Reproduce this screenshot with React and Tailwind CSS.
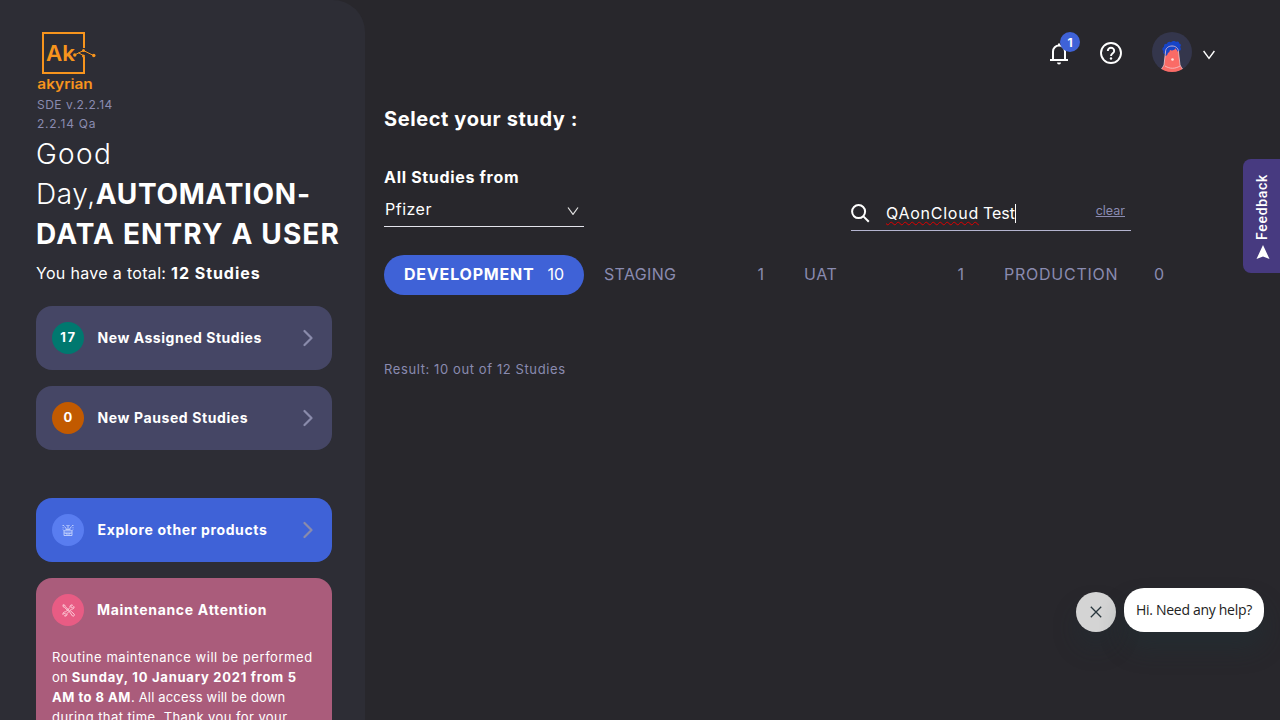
import React from "react";

function Chevron({ className }) {
  return (
    <svg className={className} viewBox="0 0 10 18" fill="none" stroke="currentColor" strokeWidth="2.2" strokeLinecap="round" strokeLinejoin="round">
      <path d="M1.500 2 8.500 9l-7 7" />
    </svg>
  );
}

function Logo() {
  return (
    <svg className="block h-[64px] w-[64px] shrink-0" viewBox="0 0 64 64" fill="none" stroke="#f7941d">
      <path d="M48 18V3H7v40h41V27" strokeWidth="2" />
      <text x="10" y="31" fill="#f7941d" stroke="none" fontSize="22" fontWeight="600" textLength="29" lengthAdjust="spacingAndGlyphs" fontFamily="Inter, sans-serif">Ak</text>
      <path d="M38.500 25 47.500 20.500 57.500 25.500M42.500 22.800l5 2.800" strokeWidth="1" />
      <g fill="#f7941d" stroke="none">
        <circle cx="38.800" cy="25" r="1.700" />
        <circle cx="47.500" cy="20.500" r="1.500" />
        <circle cx="47.500" cy="26" r="1.500" />
        <circle cx="57.800" cy="25.500" r="1.700" />
      </g>
      <text x="1.300" y="59" fill="#f7941d" stroke="none" fontSize="13.500" fontWeight="600" textLength="55.500" lengthAdjust="spacingAndGlyphs" fontFamily="Inter, sans-serif">akyrian</text>
    </svg>
  );
}

function Avatar() {
  return (
    <svg className="block size-10" viewBox="0 0 40 40">
      <defs><clipPath id="round"><circle cx="20" cy="20" r="20" /></clipPath></defs>
      <circle cx="20" cy="20" r="20" fill="#34364c" />
      <g clipPath="url(#round)">
        <path d="M13.500 20C14 16 16 14 20 14s6 2 6.500 6l1.500 13 2.500 4v4h-21v-4l2.500-4z" fill="#fa6b66" />
        <path d="M13 22c-2 0-2-2-1.500-3-2-1-1-4 .5-4-.5-2 1-4 3-3 0-2 3-3 4-1.500C20 8.500 23 8.500 24 10c2-1 3.500 0 3 1.500 2 0 2.500 2.500 1 3.500 1.500 1 1 4-1 4-1 1-2 .5-2-1-1 0-1-1-1-2-1 2-4 3-6 2-.5 2-1 3-2 2.500-.5 2-1 3.500-3 3.500z" fill="#1644c7" />
        <path d="M13.500 20c0-4 3-6 6.500-6s6.500 2 6.500 6l1.500 13c1 2 2 3 2.500 4M13.500 20 12 33c-1 2-2 3-2.500 4M13 34c5 3 10 3 15 0" fill="none" stroke="#f2c9cf" strokeWidth=".8" />
        <circle cx="20.500" cy="27.500" r="1.300" fill="#ffe2df" />
      </g>
    </svg>
  );
}

function BoxIcon() {
  return (
    <svg className="size-3" viewBox="0 0 12 12" fill="none" stroke="#dbe4ff" strokeWidth=".75">
      <path d="M2 6.800h8v4.700H2zM2 9h8M1 5.500l1 1.300M11 5.500l-1 1.300M4 9v1h4V9M6 1v4M2.500 2.500l2 2.500M9.500 2.500l-2 2.500M3.500 5.500h5M.5 1.500h1.600M10 1.500h1.500M4.500 1l.8 1M7.500 1l-.8 1M.6 3.800h1M10.500 3.800h1" />
    </svg>
  );
}

function ToolsIcon() {
  return (
    <svg className="size-[13px]" viewBox="0 0 13 13" fill="none" stroke="#ffdbe4" strokeWidth=".85">
      <path d="M1 .8 2.800 1.200 3.300 2.600 7 6.300 6.200 7 2.500 3.300 1.200 2.800zM7.500 7.800l1-1 3.700 3.400c.8 1-.6 2.600-1.700 1.800zM12 2.500 10.300 4 9 2.700 10.500 1C9 .5 7.500 1.600 8 3.500L3.500 8C1.800 7.600.6 9 1 10.500L2.500 9 4 10.500 2.500 12C4 12.500 5.500 11.400 5 9.500L9.500 5C11.200 5.500 12.500 4 12 2.500z" />
    </svg>
  );
}

function SideCard({ className, badge, badgeClass, label, labelClass }) {
  return (
    <div className={"flex h-16 shrink-0 items-center rounded-2xl pl-4 pr-[19px] " + className}>
      <div className={"flex size-8 shrink-0 items-center justify-center rounded-full text-[13px] font-bold " + badgeClass}>{badge}</div>
      <span className={"ml-[13.5px] flex-1 whitespace-nowrap text-sm font-bold " + labelClass}>{label}</span>
      <Chevron className="h-[18px] w-[10px] text-[#8a8bab]" />
    </div>
  );
}

function Tab({ label, count, tracking }) {
  return (
    <div className="flex h-[38px] w-[200px] items-center justify-between px-5">
      <span className={tracking}>{label}</span>
      <span>{count}</span>
    </div>
  );
}

export default function App() {
  return (
    <div className="relative flex h-[720px] w-[1280px] overflow-hidden bg-[#28272c] font-['Inter',sans-serif] text-white">
      <aside className="flex w-[365px] shrink-0 flex-col overflow-hidden rounded-tr-[32px] bg-[#2d2d35] pl-9 pt-[30px]">
        <Logo />
        <div className="mt-px pl-px text-xs leading-[19px] text-[#8a8bb0]">
          <div className="tracking-[0.5px]">SDE v.2.2.14</div>
          <div className="tracking-[0.75px]">2.2.14 Qa</div>
        </div>
        <h1 className="mt-px whitespace-nowrap text-[28px] font-light leading-10">
          <span className="block tracking-[1.3px]">Good</span>
          <span className="block"><span className="tracking-[0.6px]">Day,</span><b className="font-bold tracking-[0.7px]">AUTOMATION-</b></span>
          <b className="block font-bold tracking-[1.14px]">DATA ENTRY A USER</b>
        </h1>
        <p className="mt-[7px] text-base leading-6 tracking-[0.32px]">You have a total: <b className="font-bold tracking-[0.95px]">12 Studies</b></p>
        <div className="mt-[21px] flex w-[296px] flex-col">
          <SideCard className="bg-[#454665]" badge="17" badgeClass="bg-[#00786f] tracking-[1.6px] pl-px" label="New Assigned Studies" labelClass="tracking-[0.53px]" />
          <SideCard className="mt-4 bg-[#454665]" badge="0" badgeClass="bg-[#c25a00]" label="New Paused Studies" labelClass="tracking-[0.6px]" />
          <SideCard className="mt-12 bg-[#3f62d7]" badge={<BoxIcon />} badgeClass="bg-[#597df0]" label="Explore other products" labelClass="tracking-[0.63px]" />
          <div className="mt-4 h-[220px] shrink-0 rounded-2xl bg-[#aa5c7b] px-4 pt-4">
            <div className="flex items-center">
              <div className="flex size-8 items-center justify-center rounded-full bg-[#e85c84]"><ToolsIcon /></div>
              <span className="ml-[13px] text-sm font-bold tracking-[0.7px]">Maintenance Attention</span>
            </div>
            <p className="mt-[20.5px] whitespace-nowrap text-[13px] leading-[20.2px]">
              <span className="block tracking-[0.55px]">Routine maintenance will be performed</span>
              <span className="block tracking-[0.2px]">on <b className="tracking-[0.75px]">Sunday, 10 January 2021 from 5</b></span>
              <span className="block tracking-[0.17px]"><b className="tracking-[0.5px]">AM to 8 AM</b>. All access will be down</span>
              <span className="block tracking-[0.42px]">during that time. Thank you for your</span>
            </p>
          </div>
        </div>
      </aside>

      <main className="flex flex-1 flex-col pl-[19px]">
        <header className="flex h-[72px] items-end justify-end pr-[65px]">
          <div className="relative mb-[7px] h-6 w-5">
            <svg className="block h-6 w-5" viewBox="0 0 20 24" fill="none" stroke="white" strokeWidth="2">
              <path d="M1 19h18M4 19v-8.500a6 6 0 0 1 12 0V19M10 5V2.500" />
              <path d="M8 21.500h4a2 2 0 0 1-4 0z" fill="white" stroke="none" />
            </svg>
            <span className="absolute -top-[9px] left-[11px] flex size-5 items-center justify-center rounded-full bg-[#3f62d7] pt-px text-xs font-bold">1</span>
          </div>
          <svg className="mb-[7px] ml-[30px] size-6" viewBox="0 0 24 24" fill="none" stroke="white" strokeWidth="1.900">
            <circle cx="12" cy="12" r="10" />
            <path d="M8.800 10a3.200 3.200 0 0 1 6.400 0c0 2.200-3.200 2.300-3.200 5" />
            <circle cx="12" cy="17.500" r="1.200" fill="white" stroke="none" />
          </svg>
          <div className="ml-[29px]"><Avatar /></div>
          <svg className="mb-[12px] ml-[11px] h-[10px] w-3" viewBox="0 0 12 10" fill="none" stroke="white" strokeWidth="1.400"><path d="M.6 1 6 8.400 11.400 1" /></svg>
        </header>

        <h2 className="mt-8 text-xl font-bold leading-[30px] tracking-[0.6px]">Select your study :</h2>

        <div className="mt-[30px] flex h-[67px] items-start">
          <div className="w-[200px]">
            <div className="text-base font-bold leading-[26px] tracking-[0.68px]">All Studies from</div>
            <div className="mt-[3px] flex h-[34px] items-center justify-between border-b border-[#e4e4ec] pb-px pl-px pr-[5px]">
              <span className="text-base tracking-[0.5px]">Pfizer</span>
              <svg className="mt-[3px] h-2 w-3" viewBox="0 0 12 8" fill="none" stroke="#e0e0e0" strokeWidth="1.200"><path d="M1 .5 6 7.400 11 .5" /></svg>
            </div>
          </div>
          <div className="ml-[267px] mt-[34px] flex h-[33px] w-[280px] items-center border-b border-[#b4b4d0]">
            <svg className="-mt-px size-5" viewBox="0 0 20 20" fill="none" stroke="white" strokeWidth="2"><circle cx="7.600" cy="7.600" r="6.500" /><path d="m12.400 12.400 5.400 5.400" /></svg>
            <div className="-mt-0.5 ml-[15px] flex items-center text-base leading-5">
              <span className="tracking-[0.75px] underline decoration-[#e00000] decoration-wavy decoration-1 underline-offset-2 [text-decoration-skip-ink:none]">QAonCloud</span>
              <span className="ml-1">Test</span>
              <span className="h-[19px] w-px bg-white" />
            </div>
            <span className="-mt-[5px] ml-auto mr-1.5 text-[12.5px] text-[#8a8bb0] underline">clear</span>
          </div>
        </div>

        <nav className="mt-[24px] flex h-10 text-base text-[#8a8bb0]">
          <div className="flex h-10 w-[200px] items-center justify-between rounded-full bg-[#3f62d7] px-5 pb-0.5 text-white">
            <b className="tracking-[0.8px]">DEVELOPMENT</b><span>10</span>
          </div>
          <Tab label="STAGING" count="1" tracking="tracking-[0.35px]" />
          <Tab label="UAT" count="1" tracking="tracking-[0.6px]" />
          <Tab label="PRODUCTION" count="0" tracking="tracking-[0.75px]" />
        </nav>
        <p className="mt-[64px] text-[13px] leading-5 tracking-[0.6px] text-[#8a8bb0]">Result: 10 out of 12 Studies</p>
      </main>

      <div className="absolute right-0 top-[159px] flex h-[114px] w-[37.5px] flex-col items-center rounded-l-lg bg-[#473a80] pt-4">
        <span className="ml-0.5 h-[65px] rotate-180 whitespace-nowrap font-['Roboto',sans-serif] text-sm font-medium leading-[18px] tracking-[0.7px] [writing-mode:vertical-rl]">Feedback</span>
        <svg className="ml-[3px] mt-[5px] h-[14px] w-[14px]" viewBox="0 0 14 14" fill="white"><path d="M7 0 13.500 14 7 11.500.5 14z" /></svg>
      </div>

      <div className="absolute right-4 top-[588px] flex items-end gap-2">
        <div className="flex size-10 items-center justify-center rounded-full bg-[#d4d4d4] shadow-[0_16px_24px_rgba(30,50,55,0.3)]">
          <svg className="size-3" viewBox="0 0 12 12" stroke="#28363d" strokeWidth="1.300"><path d="m.8.8 10.400 10.400M11.200.8.8 11.200" /></svg>
        </div>
        <div className="flex h-11 w-[140px] items-center justify-center whitespace-nowrap rounded-[20px] bg-white font-['Open_Sans','Noto_Sans',sans-serif] text-sm tracking-[-0.3px] text-[#222] shadow-[0_16px_24px_rgba(30,50,55,0.45)]">Hi. Need any help?</div>
      </div>
    </div>
  );
}
